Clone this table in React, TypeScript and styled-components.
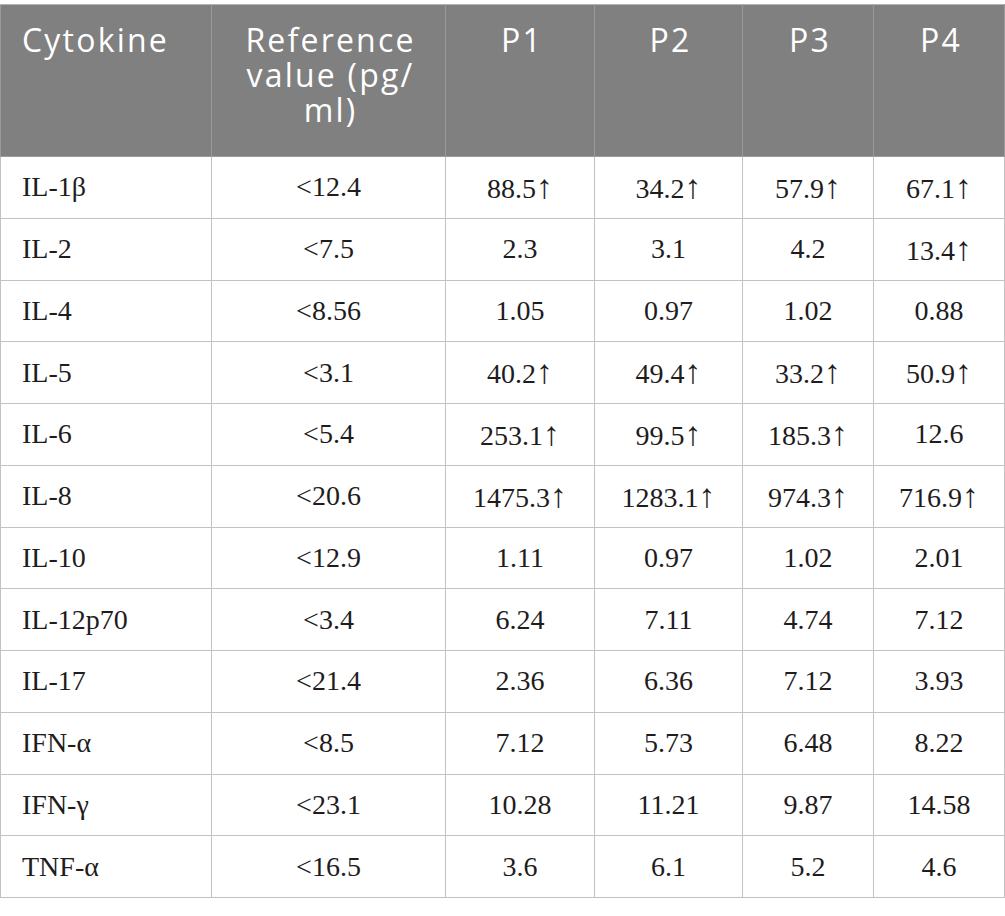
import React from "react";
import styled, { createGlobalStyle } from "styled-components";

const GlobalStyle = createGlobalStyle`
  html, body {
    margin: 0;
    padding: 0;
    background: #ffffff;
  }
`;

const Page = styled.div`
  padding-top: 4px;
  width: 1005px;
`;

const Table = styled.table`
  width: 1004px;
  border-collapse: collapse;
  table-layout: fixed;
`;

const HeadCell = styled.th<{ $align?: "left" | "center" }>`
  height: 152px;
  box-sizing: border-box;
  background: #808080;
  color: #ffffff;
  font-family: "Open Sans", "Noto Sans", sans-serif;
  font-weight: 400;
  font-size: 32px;
  line-height: 35px;
  letter-spacing: 2.2px;
  text-align: ${(p) => p.$align ?? "center"};
  vertical-align: top;
  padding: 17px 8px 0 ${(p) => (p.$align === "left" ? "21px" : "12px")};
  border: 1.5px solid #9a9a9a;
  border-top-color: #b4b4b4;
`;

const Row = styled.tr`
  height: 61.75px;
`;

const Cell = styled.td<{ $align?: "left" | "center" }>`
  box-sizing: border-box;
  font-family: "Liberation Serif", "Times New Roman", serif;
  font-size: 28px;
  color: #1e1c1d;
  text-align: ${(p) => p.$align ?? "center"};
  vertical-align: middle;
  padding: 0;
  padding-left: ${(p) => (p.$align === "left" ? "21px" : "0")};
  border: 1.5px solid #c2c2c2;
`;

const Arrow = styled.span`
  font-size: 1.2em;
  line-height: 1;
`;

const widths = [211, 234, 149, 148, 131, 131];

const headers = ["Cytokine", "Reference value (pg/ ml)", "P1", "P2", "P3", "P4"];

const rows: string[][] = [
  ["IL-1β", "<12.4", "88.5↑", "34.2↑", "57.9↑", "67.1↑"],
  ["IL-2", "<7.5", "2.3", "3.1", "4.2", "13.4↑"],
  ["IL-4", "<8.56", "1.05", "0.97", "1.02", "0.88"],
  ["IL-5", "<3.1", "40.2↑", "49.4↑", "33.2↑", "50.9↑"],
  ["IL-6", "<5.4", "253.1↑", "99.5↑", "185.3↑", "12.6"],
  ["IL-8", "<20.6", "1475.3↑", "1283.1↑", "974.3↑", "716.9↑"],
  ["IL-10", "<12.9", "1.11", "0.97", "1.02", "2.01"],
  ["IL-12p70", "<3.4", "6.24", "7.11", "4.74", "7.12"],
  ["IL-17", "<21.4", "2.36", "6.36", "7.12", "3.93"],
  ["IFN-α", "<8.5", "7.12", "5.73", "6.48", "8.22"],
  ["IFN-γ", "<23.1", "10.28", "11.21", "9.87", "14.58"],
  ["TNF-α", "<16.5", "3.6", "6.1", "5.2", "4.6"],
];

function Value({ text }: { text: string }) {
  if (text.endsWith("↑")) {
    return (
      <>
        {text.slice(0, -1)}
        <Arrow>↑</Arrow>
      </>
    );
  }
  return <>{text}</>;
}

export default function App() {
  return (
    <>
      <GlobalStyle />
      <Page>
        <Table>
          <colgroup>
            {widths.map((w, i) => (
              <col key={i} style={{ width: `${w}px` }} />
            ))}
          </colgroup>
          <thead>
            <tr>
              {headers.map((h, i) => (
                <HeadCell key={h} $align={i === 0 ? "left" : "center"}>
                  {h}
                </HeadCell>
              ))}
            </tr>
          </thead>
          <tbody>
            {rows.map((r) => (
              <Row key={r[0]}>
                {r.map((c, i) => (
                  <Cell key={i} $align={i === 0 ? "left" : "center"}>
                    <Value text={c} />
                  </Cell>
                ))}
              </Row>
            ))}
          </tbody>
        </Table>
      </Page>
    </>
  );
}
